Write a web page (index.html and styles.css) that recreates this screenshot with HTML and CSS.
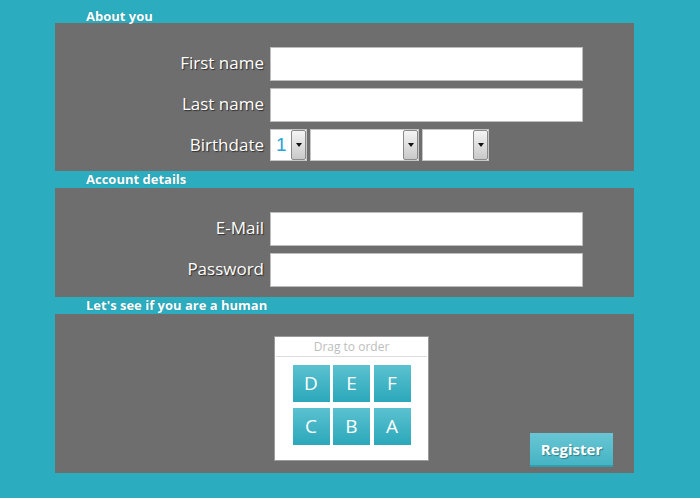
FILE: index.html
```html
<!DOCTYPE html>
<html>
<head>
<meta charset="utf-8">
<link rel="stylesheet" href="styles.css">
</head>
<body>
<div class="page">
  <h2 class="heading first">About you</h2>
  <div class="panel p1">
    <div class="form">
      <label class="label">First name</label>
      <div class="input"></div>
      <label class="label">Last name</label>
      <div class="input"></div>
      <label class="label bd">Birthdate</label>
      <div class="selects">
        <div class="select s-day"><span class="val">1</span><span class="arrow"></span></div>
        <div class="select s-month"><span class="val"></span><span class="arrow"></span></div>
        <div class="select s-year"><span class="val"></span><span class="arrow"></span></div>
      </div>
    </div>
  </div>
  <h2 class="heading">Account details</h2>
  <div class="panel p2">
    <div class="form">
      <label class="label">E-Mail</label>
      <div class="input"></div>
      <label class="label">Password</label>
      <div class="input"></div>
    </div>
  </div>
  <h2 class="heading">Let's see if you are a human</h2>
  <div class="panel p3">
    <div class="captcha">
      <div class="cap-title">Drag to order</div>
      <div class="tiles">
        <div class="tile">D</div>
        <div class="tile">E</div>
        <div class="tile">F</div>
        <div class="tile">C</div>
        <div class="tile">B</div>
        <div class="tile">A</div>
      </div>
    </div>
    <button class="register">Register</button>
  </div>
</div>
</body>
</html>
```

FILE: styles.css
```css
html, body {
  margin: 0;
  padding: 0;
}
body {
  background: #2bacbf;
  font-family: "Open Sans", "DejaVu Sans", sans-serif;
  width: 700px;
  height: 498px;
  overflow: hidden;
}
.page {
  padding: 7px 0 0 55px;
  width: 579px;
}
.heading {
  margin: 0;
  height: 17px;
  line-height: 17px;
  padding-left: 31px;
  font-size: 13px;
  font-weight: bold;
  color: #ffffff;
  text-shadow: 0 0 1px rgba(0, 0, 0, 0.25);
}
.heading.first {
  height: 16px;
  line-height: 18px;
}
.panel {
  background: #6e6e6e;
}
.p1 {
  padding: 24px 0 10px 0;
}
.p2 {
  padding: 24px 0 10px 0;
}
.form {
  display: grid;
  grid-template-columns: 209px 313px;
  column-gap: 6px;
  row-gap: 7px;
}
.label {
  text-align: right;
  color: #ffffff;
  font-size: 17px;
  line-height: 31px;
  text-shadow: 1px 1px 1px #2e2e2e;
}
.label.bd {
  line-height: 31px;
}
.input {
  height: 32px;
  background: #ffffff;
  border: 1px solid #bdbdbd;
}
.selects {
  display: flex;
  gap: 3px;
  height: 32px;
}
.select {
  display: flex;
  box-sizing: border-box;
  height: 32px;
  background: #ffffff;
  border: 1px solid #c6c6c6;
}
.s-day { width: 37px; }
.s-month { width: 109px; }
.s-year { width: 67px; }
.val {
  flex: 1;
  color: #2aa3d6;
  font-size: 19px;
  line-height: 30px;
  padding-left: 5px;
  font-family: "Liberation Sans", sans-serif;
}
.arrow {
  width: 15px;
  box-sizing: border-box;
  border: 1px solid #8a8a8a;
  border-radius: 2px;
  background: linear-gradient(#f4f4f4, #c9c9c9);
  display: flex;
  align-items: center;
  justify-content: center;
}
.arrow::after {
  content: "";
  width: 0;
  height: 0;
  border-left: 3px solid transparent;
  border-right: 3px solid transparent;
  border-top: 4px solid #111111;
}
.p3 {
  display: flex;
  align-items: flex-end;
  padding: 22px 21px 6px 219px;
}
.captcha {
  width: 155px;
  height: 125px;
  box-sizing: border-box;
  background: #ffffff;
  border: 1px solid #9a9a9a;
  margin-bottom: 6px;
}
.cap-title {
  height: 19px;
  line-height: 19px;
  margin: 0 1px;
  text-align: center;
  font-size: 12px;
  color: #bdbdbd;
  border-bottom: 1px solid #dcdcdc;
}
.tiles {
  display: grid;
  grid-template-columns: repeat(3, 37px);
  column-gap: 3.5px;
  row-gap: 6px;
  justify-content: center;
  padding-top: 8px;
}
.tile {
  height: 37px;
  line-height: 37px;
  text-align: center;
  color: #ffffff;
  font-size: 19px;
  background: linear-gradient(#5bc1d0, #2ba8ba);
}
.register {
  margin-left: auto;
  width: 83px;
  height: 34px;
  padding: 0;
  border: none;
  border-bottom: 2px solid #2f9fb0;
  background: linear-gradient(#69c6d4, #45b4c4);
  color: #ffffff;
  font-family: "Open Sans", "DejaVu Sans", sans-serif;
  font-weight: bold;
  font-size: 15px;
  text-shadow: 1px 1px 1px #2f7f8a;
}
```
